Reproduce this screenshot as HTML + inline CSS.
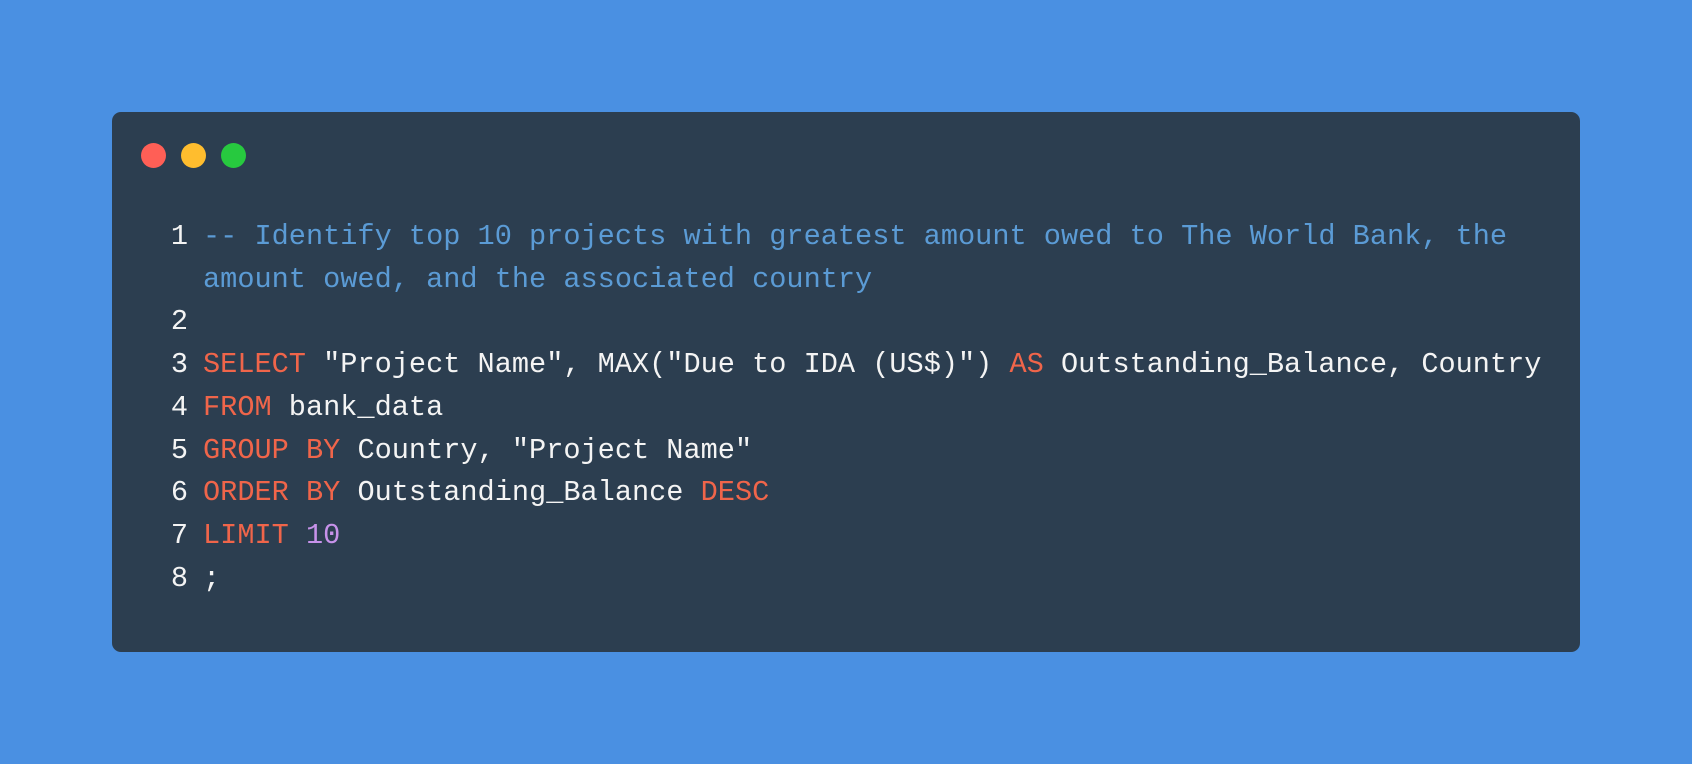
<!DOCTYPE html>
<html><head><style>
html,body{margin:0;padding:0;}
body{width:1692px;height:764px;background:#4a90e2;position:relative;overflow:hidden;}
.card{position:absolute;left:112px;top:112px;width:1468px;height:540px;background:#2c3e50;border-radius:9px;}
.dot{position:absolute;top:143px;width:25px;height:25px;border-radius:50%;}
.code{position:absolute;left:160px;top:216px;font-family:"Liberation Mono",monospace;font-size:28.6px;line-height:42.7px;color:#f4f4f4;white-space:pre;}
.n{display:inline-block;width:28px;text-align:right;margin-right:15px;}
.c{color:#5b9bd5}.k{color:#f0654a}.p{color:#c792ea}
</style></head><body>
<div class="card"></div>
<div class="dot" style="left:141px;background:#ff5f56"></div>
<div class="dot" style="left:181px;background:#ffbd2e"></div>
<div class="dot" style="left:221px;background:#27c93f"></div>
<div class="code"><div><span class="n">1</span><span class="c">-- Identify top 10 projects with greatest amount owed to The World Bank, the</span></div><div><span class="n"></span><span class="c">amount owed, and the associated country</span></div><div><span class="n">2</span></div><div><span class="n">3</span><span class="k">SELECT</span> "Project Name", MAX("Due to IDA (US$)") <span class="k">AS</span> Outstanding_Balance, Country</div><div><span class="n">4</span><span class="k">FROM</span> bank_data</div><div><span class="n">5</span><span class="k">GROUP BY</span> Country, "Project Name"</div><div><span class="n">6</span><span class="k">ORDER BY</span> Outstanding_Balance <span class="k">DESC</span></div><div><span class="n">7</span><span class="k">LIMIT</span> <span class="p">10</span></div><div><span class="n">8</span>;</div></div>
</body></html>
